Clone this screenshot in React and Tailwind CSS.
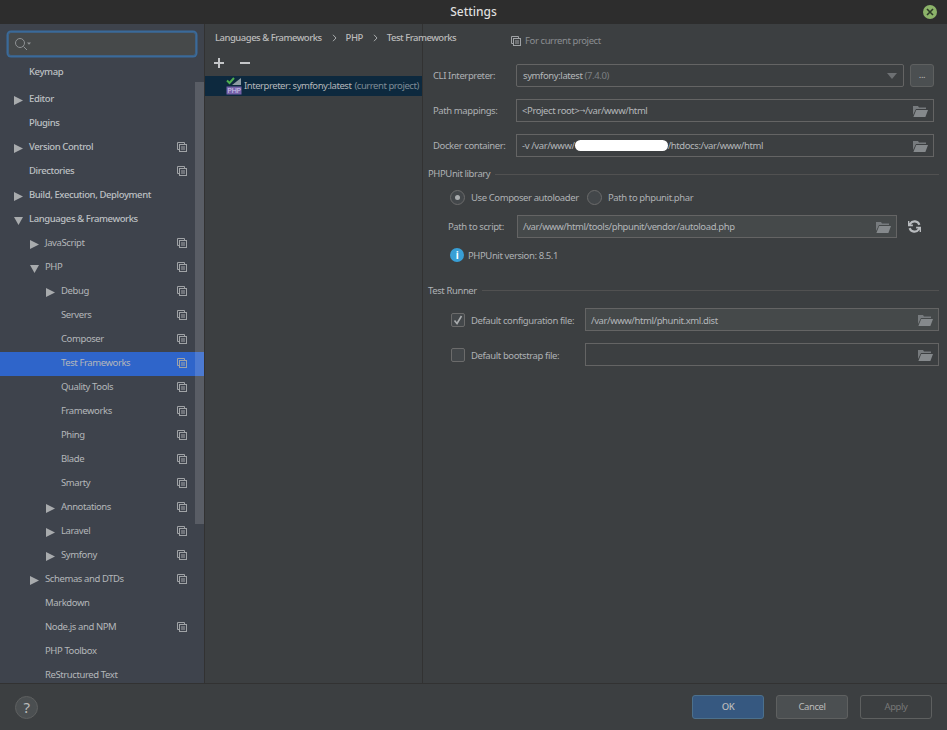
import React from "react";

const tree = [
  { name: "Editor", level: 0, arrow: "right", bold: true },
  { name: "Plugins", level: 0, bold: true },
  { name: "Version Control", level: 0, arrow: "right", bold: true, copy: true },
  { name: "Directories", level: 0, bold: true, copy: true },
  { name: "Build, Execution, Deployment", level: 0, arrow: "right", bold: true },
  { name: "Languages & Frameworks", level: 0, arrow: "down", bold: true },
  { name: "JavaScript", level: 1, arrow: "right", copy: true },
  { name: "PHP", level: 1, arrow: "down", copy: true },
  { name: "Debug", level: 2, arrow: "right", copy: true },
  { name: "Servers", level: 2, copy: true },
  { name: "Composer", level: 2, copy: true },
  { name: "Test Frameworks", level: 2, copy: true, selected: true },
  { name: "Quality Tools", level: 2, copy: true },
  { name: "Frameworks", level: 2, copy: true },
  { name: "Phing", level: 2, copy: true },
  { name: "Blade", level: 2, copy: true },
  { name: "Smarty", level: 2, copy: true },
  { name: "Annotations", level: 2, arrow: "right", copy: true },
  { name: "Laravel", level: 2, arrow: "right", copy: true },
  { name: "Symfony", level: 2, arrow: "right", copy: true },
  { name: "Schemas and DTDs", level: 1, arrow: "right", copy: true },
  { name: "Markdown", level: 1 },
  { name: "Node.js and NPM", level: 1, copy: true },
  { name: "PHP Toolbox", level: 1 },
  { name: "ReStructured Text", level: 1 },
];

const indent = ["pl-[14px]", "pl-[30px]", "pl-[46px]"];

const CopyIcon = ({ className = "" }) => (
  <svg width="10" height="10" viewBox="0 0 10 10" fill="none" stroke="#a0a3a6" className={className}>
    <path d="M2 7.5H.5V.5H7.5V2" />
    <rect x="2.5" y="2.5" width="7" height="7" />
    <path d="M4 5h4M4 7h4" />
  </svg>
);

const FolderIcon = () => (
  <svg width="15" height="12" viewBox="0 0 15 12" className="shrink-0">
    <path d="M0 1h5l1 1.5h7V4H3L0 10z" fill="#777b7e" />
    <path d="M3.2 5H15l-2.6 7H0.4z" fill="#85898c" />
  </svg>
);

const Arrow = ({ dir }) => (
  <svg width="9" height="9" viewBox="0 0 9 9" fill="#a8abad">
    {dir === "right" ? <path d="M0 0l9 4.5L0 9z" /> : <path d="M0 1h9L4.5 9z" />}
  </svg>
);

const Chevron = () => (
  <svg width="5" height="8" viewBox="0 0 5 8" fill="none" stroke="#a8abad" strokeWidth="1" className="shrink-0">
    <path d="M1 .8L4 4L1 7.2" />
  </svg>
);

const TreeRow = ({ row }) => (
  <div
    className={`flex h-6 shrink-0 items-center pr-[17px] ${indent[row.level]} ${
      row.selected ? "bg-[#2f65ca]" : ""
    }`}
  >
    <span className="flex w-[15px] shrink-0 items-center">{row.arrow && <Arrow dir={row.arrow} />}</span>
    <span className={`flex-1 -translate-y-px whitespace-nowrap ${row.bold ? "font-medium text-[#bdc0c3]" : "text-[#b4b7ba]"}`}>
      {row.name}
    </span>
    {row.copy && <CopyIcon className="-translate-y-px" />}
  </div>
);

const Sidebar = () => (
  <div className="relative flex h-full w-[204px] shrink-0 flex-col overflow-hidden bg-[#3e434c]">
    <div className="px-2 pt-2">
      <div className="flex h-6 items-center rounded-[3px] border border-[#3d6185] bg-[#46494a] pl-[5px] shadow-[0_0_0_1.5px_#3a6a9a]">
        <svg width="17" height="14" viewBox="0 0 17 14" fill="none" stroke="#8f9295" strokeWidth="1">
          <circle cx="6" cy="6" r="4.5" />
          <path d="M9.5 9.5L13 13" />
          <path d="M13 5.5h4l-2 2.2z" fill="#8f9295" stroke="none" />
        </svg>
      </div>
    </div>
    <div className="mt-1 flex h-6 shrink-0 items-center pl-[29px] font-medium text-[#bdc0c3]">Keymap</div>
    <div className="mt-1 flex flex-col">
      {tree.map((row) => (
        <TreeRow key={row.name} row={row} />
      ))}
    </div>
    {/* overlay scrollbar */}
    <div className="absolute left-[195px] top-[58px] h-[442px] w-[9px] bg-[#ffffff24]" />
  </div>
);

const PhpIcon = () => (
  <svg width="16" height="18" viewBox="0 0 16 18" className="shrink-0">
    <path d="M15 1v7H6z" fill="#8e9ba3" />
    <path d="M1 3.5l2.5 2.5L8 1" fill="none" stroke="#4fae4f" strokeWidth="2" />
    <rect x="0.5" y="9.5" width="15" height="8" fill="#7561a8" />
    <text x="8" y="16.2" fontSize="7.5" textAnchor="middle" fill="#cfc8ea">
      PHP
    </text>
  </svg>
);

const MiddlePanel = () => (
  <div className="flex w-[218px] shrink-0 flex-col border-r border-[#323232]">
    <div className="flex h-7 items-center pl-[10px] font-medium tracking-[-0.5px] whitespace-nowrap text-[#bbbbbb]">
      <span>Languages &amp; Frameworks</span>
      <span className="mr-[9px] ml-[10px] flex"><Chevron /></span>
      <span>PHP</span>
      <span className="mr-[9px] ml-[10px] flex"><Chevron /></span>
      <span>Test Frameworks</span>
    </div>
    <div className="mb-[2px] flex h-[22px] items-center gap-[14px] pb-px pl-[8px]">
      <svg width="12" height="12" viewBox="0 0 12 12" stroke="#c4c6c8" strokeWidth="2">
        <path d="M6 1v10M1 6h10" />
      </svg>
      <svg width="12" height="12" viewBox="0 0 12 12" stroke="#c4c6c8" strokeWidth="2">
        <path d="M1 6h10" />
      </svg>
    </div>
    <div className="flex h-5 items-center bg-[#0d293e] pl-[21px] tracking-[-0.45px] whitespace-nowrap">
      <PhpIcon />
      <span className="ml-[2px] text-[#b4b7ba]">Interpreter: symfony:latest</span>
      <span className="ml-[3px] text-[#7f8c96]">(current project)</span>
    </div>
  </div>
);

const TextField = ({ children, filled, className = "" }) => (
  <div
    className={`flex h-[23px] items-center justify-between border border-[#646464] pr-[5px] pl-[5px] whitespace-nowrap text-[#b4b7ba] ${
      filled ? "bg-[#45494a]" : ""
    } ${className}`}
  >
    <span className="flex translate-y-px items-center">{children}</span>
    <FolderIcon />
  </div>
);

const Label = ({ children, className = "" }) => (
  <span className={`translate-y-px whitespace-nowrap text-[#aeb1b4] ${className}`}>{children}</span>
);

const SectionTitle = ({ title, className = "" }) => (
  <div className={`flex h-[15px] items-center gap-[5px] ${className}`}>
    <span className="whitespace-nowrap text-[#aeb1b4]">{title}</span>
    <div className="h-px flex-1 bg-[#515151]" />
  </div>
);

const SettingsPanel = () => (
  <div className="flex min-w-0 flex-1 flex-col overflow-hidden pr-2 pl-[5px]">
    <div className="flex h-[34px] items-center pl-[83px] text-[#8b8e91]">
      <CopyIcon className="mr-[4px]" />
      For current project
    </div>
    {/* interpreter block */}
    <div className="mt-[6px] flex h-[23px] items-center pl-[5px]">
      <Label className="w-[83px]">CLI Interpreter:</Label>
      <div className="flex h-[23px] w-[388px] items-center justify-between rounded-[2px] border border-[#646464] pr-[6px] pl-[6px] whitespace-nowrap">
        <span className="translate-y-px">
          <span className="text-[#b4b7ba]">symfony:latest</span> <span className="text-[#7d8083]">(7.4.0)</span>
        </span>
        <span className="h-0 w-0 border-x-[5px] border-t-[6px] border-x-transparent border-t-[#6d7073]" />
      </div>
      <div className="ml-[6px] flex h-[23px] w-6 items-center justify-center rounded-[3px] border border-[#5e6060] bg-[#4b4f51] pb-[1px] text-[#bbbbbb]">
        ...
      </div>
    </div>
    <div className="mt-3 flex items-center pl-[5px]">
      <Label className="w-[83px]">Path mappings:</Label>
      <TextField className="w-[418px]">
        &lt;Project root&gt;
        <span className="font-['DejaVu_Sans'] text-[7px]">→</span>
        /var/www/html
      </TextField>
    </div>
    <div className="mt-3 flex items-center pl-[5px]">
      <Label className="w-[83px]">Docker container:</Label>
      <TextField className="w-[418px]">
        -v /var/www/
        <span className="h-[11px] w-[93px] -translate-y-px rounded-full bg-white" />
        /htdocs:/var/www/html
      </TextField>
    </div>

    <SectionTitle title="PHPUnit library" className="mt-[10px]" />
    <div className="mt-2 flex items-center pl-[22px]">
      <span className="flex h-[15px] w-[15px] items-center justify-center rounded-full border border-[#6b6b6b] bg-[#43474a]">
        <span className="h-[5px] w-[5px] rounded-full bg-[#a9acae]" />
      </span>
      <Label className="ml-[6px] w-[116px]">Use Composer autoloader</Label>
      <span className="h-[15px] w-[15px] rounded-full border border-[#6b6b6b] bg-[#43474a]" />
      <Label className="ml-[6px]">Path to phpunit.phar</Label>
    </div>
    <div className="mt-[10px] flex items-center pl-5">
      <Label className="w-[69px]">Path to script:</Label>
      <TextField filled className="w-[380px]">
        /var/www/html/tools/phpunit/vendor/autoload.php
      </TextField>
      <svg width="13" height="13" viewBox="0 0 24 24" fill="none" stroke="#b9bcbf" strokeWidth="4" className="ml-[11px]">
        <path d="M21 9a9.5 9.5 0 0 0-17-2L2 9" />
        <path d="M3 15a9.5 9.5 0 0 0 17 2l2-2" />
        <path d="M1 2v8h8M23 22v-8h-8" strokeWidth="3" />
      </svg>
    </div>
    <div className="mt-[10px] flex items-center pl-[22px]">
      <span className="flex h-[14px] w-[14px] items-center justify-center rounded-full bg-[#389fd6] text-[10px] leading-none font-bold text-white">
        i
      </span>
      <Label className="ml-[4px]">PHPUnit version: 8.5.1</Label>
    </div>

    <SectionTitle title="Test Runner" className="mt-[21px]" />
    <div className="mt-[10px] flex items-center pl-[23px]">
      <span className="flex h-[14px] w-[14px] items-center justify-center rounded-[2px] border border-[#6b6b6b] bg-[#43474a]">
        <svg width="10" height="10" viewBox="0 0 10 10" fill="none" stroke="#a9acae" strokeWidth="1.6">
          <path d="M1.5 5.5L4 8.5L8.5 1" />
        </svg>
      </span>
      <Label className="ml-[6px] w-[114px]">Default configuration file:</Label>
      <TextField filled className="w-[354px]">/var/www/html/phunit.xml.dist</TextField>
    </div>
    <div className="mt-3 flex items-center pl-[23px]">
      <span className="h-[14px] w-[14px] rounded-[2px] border border-[#6b6b6b] bg-[#43474a]" />
      <Label className="ml-[6px] w-[114px]">Default bootstrap file:</Label>
      <TextField className="w-[354px]" />
    </div>
  </div>
);

const Footer = () => (
  <div className="flex h-[47px] shrink-0 items-start border-t border-[#323232] pt-[11px] pr-[15px] pl-[15px]">
    <div className="mt-px flex h-[23px] w-[23px] items-center justify-center rounded-full border border-[#5e6060] bg-[#4b4f51] text-[15px] text-[#bbbbbb]">
      ?
    </div>
    <div className="ml-auto flex gap-3">
      <button className="h-6 w-[72px] rounded-[3px] border border-[#4c708c] bg-[#365880] font-medium text-[#bbbbbb]">OK</button>
      <button className="h-6 w-[72px] rounded-[3px] border border-[#5e6060] bg-[#4b4f51] text-[#bbbbbb]">Cancel</button>
      <button className="h-6 w-[72px] rounded-[3px] border border-[#5e6060] text-[#777777]">Apply</button>
    </div>
  </div>
);

export default function App() {
  return (
    <div className="flex h-[730px] w-[947px] flex-col overflow-hidden bg-[#3c3f41] font-['Noto_Sans',sans-serif] text-[9.5px] tracking-[-0.4px]">
      <div className="relative flex h-6 shrink-0 items-center justify-center bg-[#2d2d2d] text-[12px] font-medium tracking-normal text-[#dfdfdf]">
        Settings
        <span className="absolute top-[5px] right-[10px] flex h-[14px] w-[14px] items-center justify-center rounded-full bg-[#8cb369]">
          <svg width="8" height="8" viewBox="0 0 8 8" stroke="#2d3a28" strokeWidth="1.6">
            <path d="M1 1l6 6M7 1L1 7" />
          </svg>
        </span>
      </div>
      <div className="flex min-h-0 flex-1">
        <Sidebar />
        <div className="w-px bg-[#323232]" />
        <MiddlePanel />
        <SettingsPanel />
      </div>
      <Footer />
    </div>
  );
}
